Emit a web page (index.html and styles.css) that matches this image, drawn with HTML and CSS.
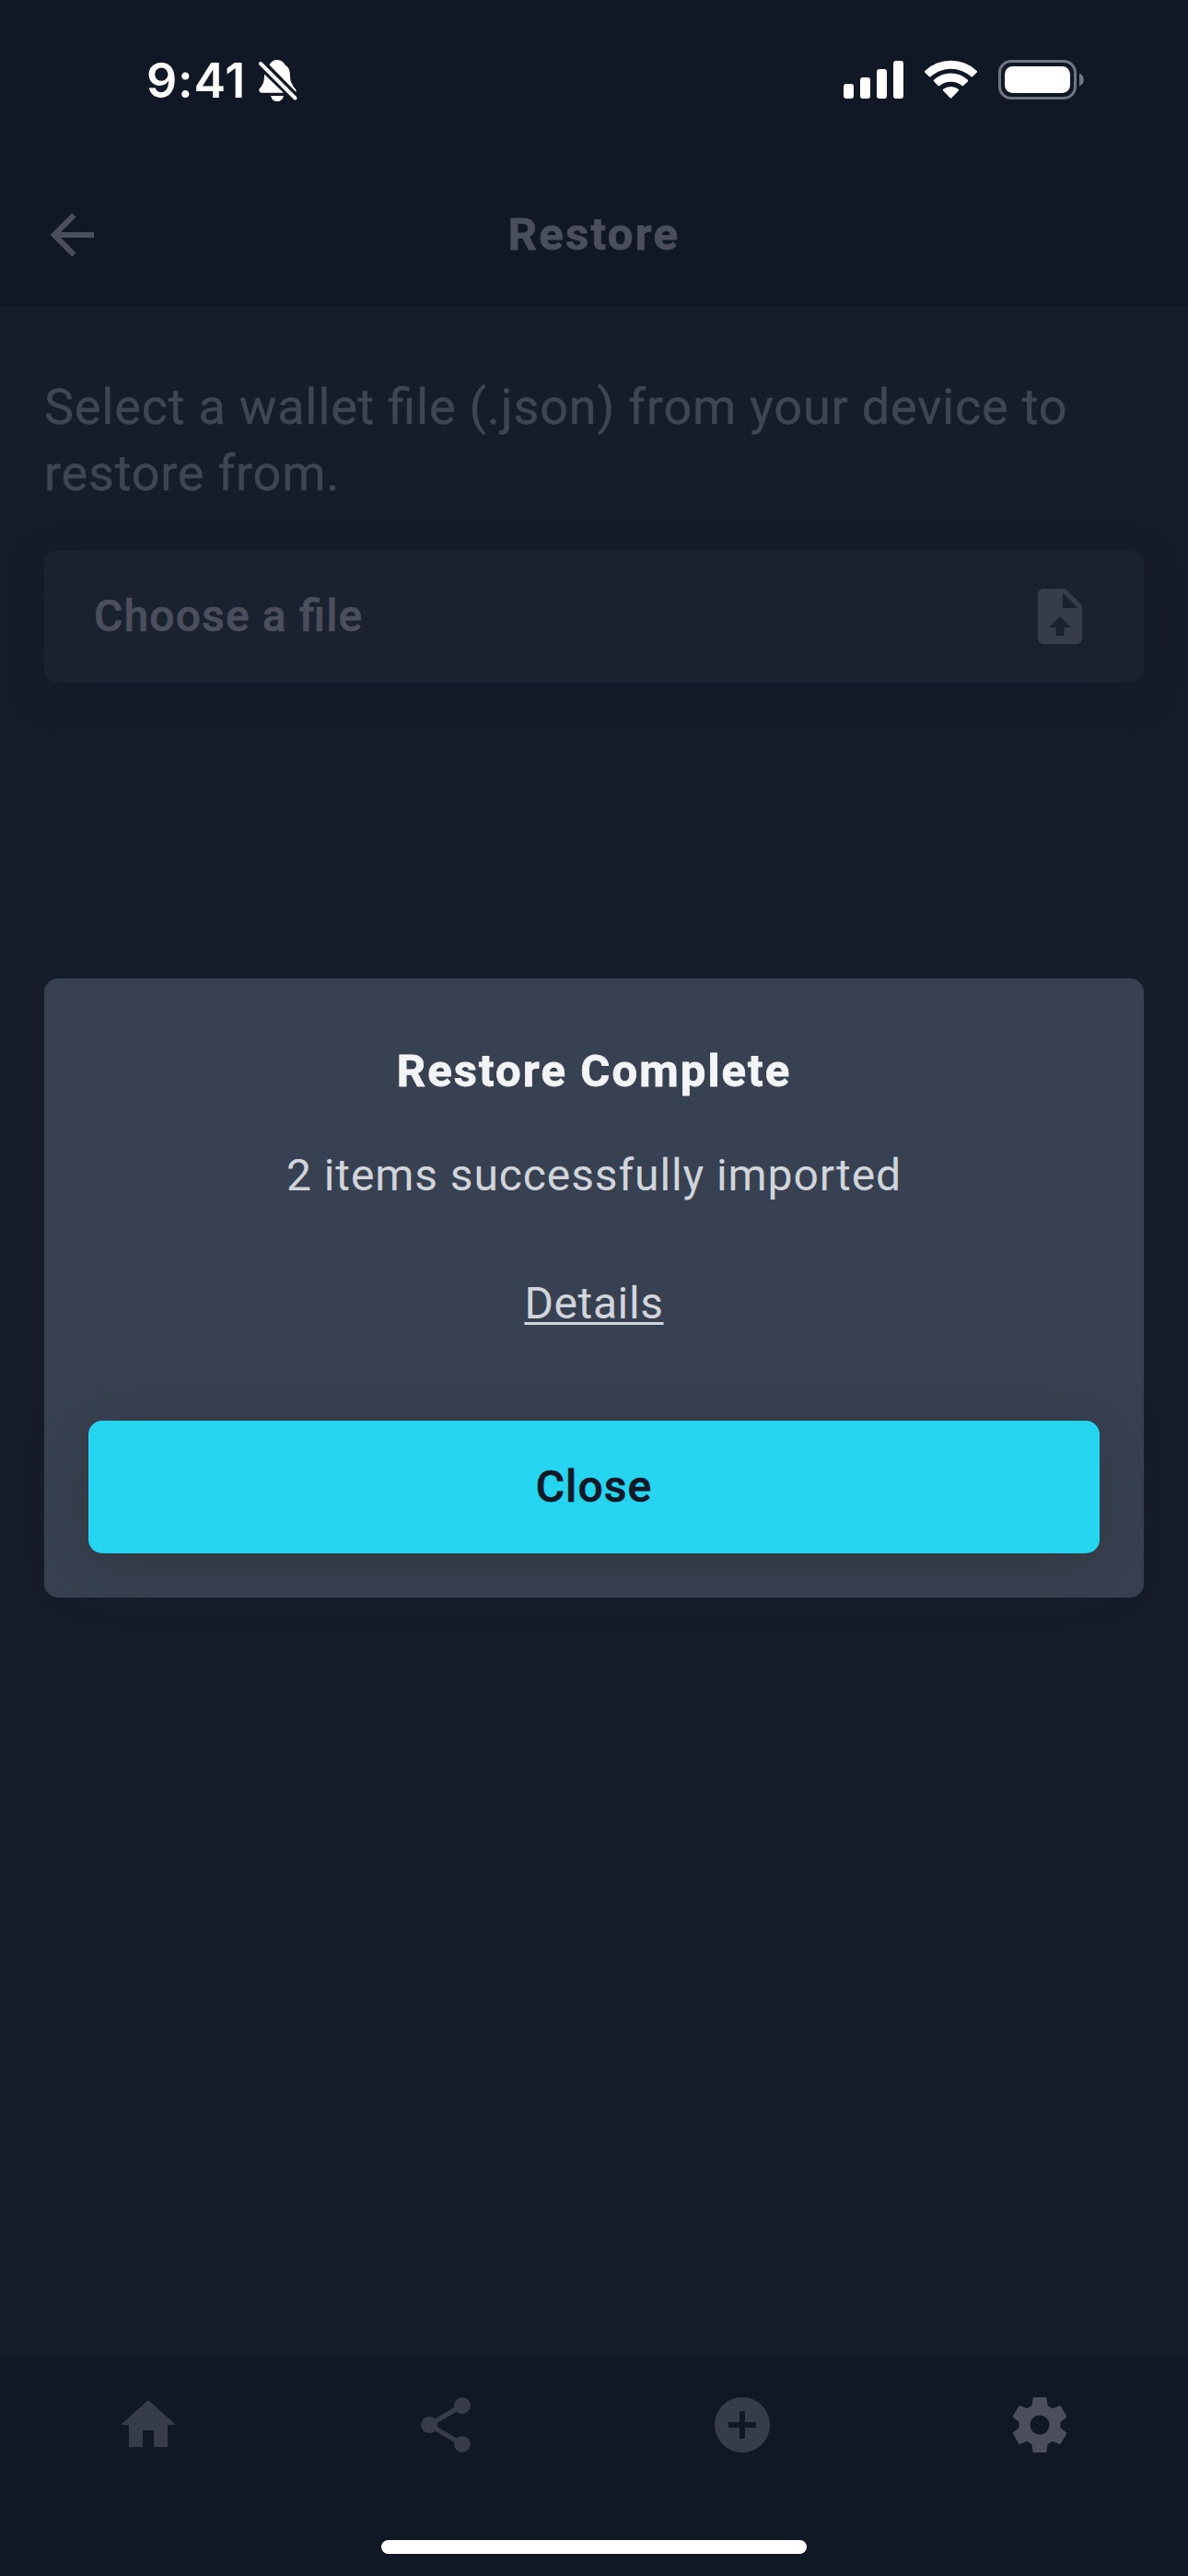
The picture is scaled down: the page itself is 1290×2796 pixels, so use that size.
FILE: index.html
```html
<!DOCTYPE html>
<html lang="en">
<head>
<meta charset="utf-8">
<title>Restore</title>
<link rel="stylesheet" href="styles.css">
</head>
<body>
<div class="screen">
  <div class="statusbar">
    <div class="status-left">
      <span class="time">9:41</span>
      <svg class="bell" width="44" height="48" viewBox="0 0 44 48">
        <path fill="#fff" d="M12.500 6.500Q15 1 21 1Q27 1 30 7Q35 9 35 19Q35 26 41 33Q42 35 41.500 36Z"/>
        <path fill="#fff" d="M7 16.500L28 36.700H4Q.500 36 1.500 32.500Q6.500 28 7 20ZM14 40H28Q26.500 46 21 46T14 40Z"/>
        <path stroke="#fff" stroke-width="4" stroke-linecap="round" d="M3 5L40.500 42.500"/>
      </svg>
    </div>
    <div class="status-right">
      <svg width="66" height="44" viewBox="0 0 66 44" fill="#fff">
        <rect x="0" y="27" width="11" height="16" rx="3"/><rect x="18" y="20" width="11" height="23" rx="3"/><rect x="36" y="11" width="11" height="32" rx="3"/><rect x="54" y="2" width="11" height="41" rx="3"/>
      </svg>
      <svg class="wifi" width="59" height="44" viewBox="0 0 59 44" fill="#fff">
        <path d="M1.400 14.700Q.400 13.700 1.500 12.700A41 41 0 0 1 57.500 12.700Q58.600 13.700 57.600 14.700L53 19.300Q52.300 19.800 51.500 19.200A33 33 0 0 0 7.500 19.200Q6.700 19.800 6 19.300Z"/>
        <path d="M11.200 24.500Q10.300 23.500 11.300 22.600A27 27 0 0 1 47.700 22.600Q48.700 23.500 47.800 24.500L43.200 29Q42.400 29.700 41.500 29A19.500 19.500 0 0 0 17.500 29Q16.600 29.700 15.800 29Z"/>
        <path d="M21.200 34.500Q20.300 33.500 21.300 32.700A13.500 13.500 0 0 1 37.700 32.700Q38.700 33.500 37.800 34.500L30.300 42.300Q29.500 43 28.700 42.300Z"/>
      </svg>
      <svg width="94" height="44" viewBox="0 0 94 44">
        <rect x="1.500" y="2.500" width="82" height="40" rx="12.500" fill="none" stroke="#717580" stroke-width="3"/>
        <rect x="7" y="8" width="71" height="29" rx="8.500" fill="#fff"/>
        <path d="M88 15.500A7.500 7.500 0 0 1 88 29.500Z" fill="#717580"/>
      </svg>
    </div>
  </div>
  <header class="header">
    <svg class="icon" viewBox="0 0 24 24"><path d="M20,11V13H8L13.500,18.500L12.080,19.920L4.160,12L12.080,4.080L13.500,5.500L8,11H20Z"/></svg>
    <h1 class="title">Restore</h1>
    <span class="header-end"></span>
  </header>
  <main class="content">
    <p class="description">Select a wallet file (.json) from your device to<br>restore from.</p>
    <button class="file">Choose a file
      <svg class="icon dim" viewBox="0 0 24 24"><path d="M14,2H6C4.890,2 4,2.890 4,4V20A2,2 0 0,0 6,22H18A2,2 0 0,0 20,20V8L14,2M13.500,16V19H10.500V16H8L12,12L16,16H13.500M13,9V3.500L18.500,9H13Z"/></svg>
    </button>
  </main>
  <nav class="tabbar">
    <div class="tabs">
      <svg class="icon dim" viewBox="0 0 24 24"><path d="M10,20V14H14V20H19V12H22L12,3L2,12H5V20H10Z"/></svg>
      <svg class="icon dim" viewBox="0 0 24 24"><path d="M18,16.080C17.240,16.080 16.560,16.380 16.040,16.850L8.910,12.700C8.960,12.470 9,12.240 9,12C9,11.760 8.960,11.530 8.910,11.300L15.960,7.190C16.500,7.690 17.210,8 18,8A3,3 0 0,0 21,5A3,3 0 0,0 18,2A3,3 0 0,0 15,5C15,5.240 15.040,5.470 15.090,5.700L8.040,9.810C7.500,9.310 6.790,9 6,9A3,3 0 0,0 3,12A3,3 0 0,0 6,15C6.790,15 7.500,14.690 8.040,14.190L15.160,18.340C15.110,18.550 15.080,18.770 15.080,19C15.080,20.610 16.390,21.910 18,21.910C19.610,21.910 20.920,20.610 20.920,19A2.920,2.920 0 0,0 18,16.080Z"/></svg>
      <svg class="icon dim" viewBox="0 0 24 24"><path d="M17,13H13V17H11V13H7V11H11V7H13V11H17M12,2A10,10 0 0,0 2,12A10,10 0 0,0 12,22A10,10 0 0,0 22,12A10,10 0 0,0 12,2Z"/></svg>
      <svg class="icon" viewBox="0 0 24 24"><path d="M12,15.500A3.500,3.500 0 0,1 8.500,12A3.500,3.500 0 0,1 12,8.500A3.500,3.500 0 0,1 15.500,12A3.500,3.500 0 0,1 12,15.500M19.430,12.970C19.470,12.650 19.500,12.330 19.500,12C19.500,11.670 19.470,11.340 19.430,11L21.540,9.370C21.730,9.220 21.780,8.950 21.660,8.730L19.660,5.270C19.540,5.050 19.270,4.960 19.050,5.050L16.560,6.050C16.040,5.660 15.500,5.320 14.870,5.070L14.500,2.420C14.460,2.180 14.250,2 14,2H10C9.750,2 9.540,2.180 9.500,2.420L9.130,5.070C8.500,5.320 7.960,5.660 7.440,6.050L4.950,5.050C4.730,4.960 4.460,5.050 4.340,5.270L2.340,8.730C2.210,8.950 2.270,9.220 2.460,9.370L4.570,11C4.530,11.340 4.500,11.670 4.500,12C4.500,12.330 4.530,12.650 4.570,12.970L2.460,14.630C2.270,14.780 2.210,15.050 2.340,15.270L4.340,18.730C4.460,18.950 4.730,19.030 4.950,18.950L7.440,17.940C7.960,18.340 8.500,18.680 9.130,18.930L9.500,21.580C9.540,21.820 9.750,22 10,22H14C14.250,22 14.460,21.820 14.500,21.580L14.870,18.930C15.500,18.670 16.040,18.340 16.560,17.940L19.050,18.950C19.270,19.030 19.540,18.950 19.660,18.730L21.660,15.270C21.780,15.050 21.730,14.780 21.540,14.630L19.430,12.970Z"/></svg>
    </div>
    <div class="indicator"></div>
  </nav>
  <div class="overlay">
    <section class="modal">
      <h2 class="modal-title">Restore Complete</h2>
      <p class="message">2 items successfully imported</p>
      <a class="details">Details</a>
      <button class="close">Close</button>
    </section>
  </div>
</div>
</body>
</html>
```
FILE: styles.css
```css
* { box-sizing: border-box; margin: 0; }
body {
  background: #161d29;
  font-family: Roboto, "Liberation Sans", sans-serif;
  font-size: 48px;
  line-height: 72px;
  font-feature-settings: "liga" 1;
}
button { border: 0; font: inherit; color: inherit; }
svg { display: block; flex: none; }
.screen { position: relative; width: 1290px; height: 2796px; display: flex; flex-direction: column; overflow: hidden; }
.statusbar { height: 177px; padding: 64px 112px 0 159px; display: flex; justify-content: space-between; background: #101725; }
.status-left, .status-right { display: flex; align-items: flex-start; }
.time { width: 108px; font: 600 52px/48px Inter, sans-serif; letter-spacing: .8px; white-space: nowrap; color: #fff; }
.bell { margin-left: 13px; }
.wifi { margin: 0 22px 0 21px; }
.header { height: 156px; padding: 0 42px; display: flex; align-items: center; justify-content: space-between; background: #101725; color: #4a4f5b; }
.header-end { width: 72px; }
.title { font-size: 49px; font-weight: 700; letter-spacing: 2.3px; -webkit-text-stroke: .8px currentColor; }
.icon { width: 72px; height: 72px; fill: #4a4f5b; }
.dim { fill: #363c49; }
.content { flex: 1; padding: 73px 48px 72px; color: #4a4f5b; }
.description { font-size: 54px; letter-spacing: .8px; -webkit-text-stroke: .4px currentColor; color: #404552; }
.file { margin-top: 47px; width: 100%; height: 144px; padding: 0 55px 0 54px; display: flex; align-items: center; justify-content: space-between; border-radius: 15px; background: #1a2230; font-weight: 500; letter-spacing: 1.15px; -webkit-text-stroke: .6px currentColor; box-shadow: 0 12px 36px rgba(18, 24, 42, .6); }
.tabbar { height: 237px; background: #101725; display: flex; flex-direction: column; align-items: center; justify-content: space-between; padding: 37px 0 24px; }
.tabs { width: 100%; display: grid; grid-template-columns: repeat(4, 1fr); justify-items: center; }
.indicator { width: 462px; height: 15px; border-radius: 8px; background: #fff; }
.overlay { position: absolute; inset: 0; display: flex; align-items: center; padding: 0 48px; }
.modal { width: 100%; height: 672px; padding: 65px 48px 48px; display: flex; flex-direction: column; align-items: center; border-radius: 15px; background: #384151; color: #d1d5db; }
.modal-title { font-size: 49px; font-weight: 700; letter-spacing: 2.1px; -webkit-text-stroke: .8px currentColor; color: #f3f4f6; }
.message { margin-top: 41px; letter-spacing: .9px; }
.details { margin-top: 67px; letter-spacing: .6px; text-decoration: underline; text-decoration-thickness: 3px; text-underline-offset: 4px; }
.close { margin-top: auto; width: 100%; height: 144px; border-radius: 15px; background: #25d5f0; color: #111827; font-weight: 500; letter-spacing: 1.1px; -webkit-text-stroke: .6px currentColor; box-shadow: 0 12px 60px rgba(44, 48, 54, .6); }
```
